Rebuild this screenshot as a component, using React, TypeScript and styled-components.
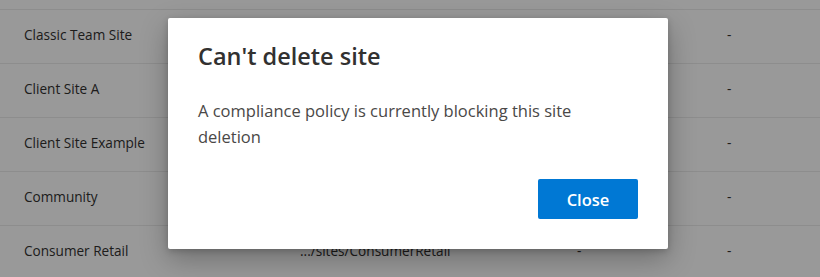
import styled, { createGlobalStyle } from 'styled-components';

const GlobalStyle = createGlobalStyle`
  html, body {
    margin: 0;
    padding: 0;
    background: #ffffff;
    font-family: "Open Sans", "Noto Sans", sans-serif;
  }
`;

const Page = styled.div`
  position: relative;
  width: 820px;
  height: 277px;
  overflow: hidden;
  background: #ffffff;
`;

const Table = styled.div`
  display: flex;
  flex-direction: column;
  padding-top: 9px;
`;

const Row = styled.div`
  display: grid;
  grid-template-columns: 276px 274px 150px 1fr;
  align-items: center;
  height: 54px;
  box-sizing: border-box;
  padding: 0 0 5px 24px;
  border-top: 1px solid #ebebeb;
  font-size: 13.6px;
  color: #323130;
`;

const Cell = styled.div<{ $center?: boolean }>`
  white-space: nowrap;
  ${(p) => (p.$center ? 'padding-left: 3px;' : '')}
`;

const Overlay = styled.div`
  position: absolute;
  inset: 0;
  background: rgba(0, 0, 0, 0.4);
`;

const Dialog = styled.div`
  position: absolute;
  left: 168px;
  top: 18px;
  width: 500px;
  height: 231px;
  box-sizing: border-box;
  background: #ffffff;
  border-radius: 2px;
  box-shadow: 0 10px 28px rgba(0, 0, 0, 0.28), 0 2px 6px rgba(0, 0, 0, 0.18);
  padding: 21px 30px 30px 30px;
  display: flex;
  flex-direction: column;
`;

const Title = styled.h2`
  margin: 0;
  font-size: 23.5px;
  font-weight: 600;
  line-height: 34px;
  color: #323130;
`;

const Body = styled.p`
  margin: 25px 0 0 0;
  font-size: 16.5px;
  line-height: 26px;
  color: #4a4847;
  width: 420px;
`;

const Footer = styled.div`
  margin-top: auto;
  display: flex;
  justify-content: flex-end;
`;

const PrimaryButton = styled.button`
  width: 100px;
  height: 40px;
  border: none;
  border-radius: 2px;
  background: #0078d4;
  color: #ffffff;
  font-family: inherit;
  font-size: 16.5px;
  font-weight: 600;
  cursor: pointer;
`;

const rows = [
  { name: 'Classic Team Site', url: '', a: '', b: '-' },
  { name: 'Client Site A', url: '', a: '', b: '-' },
  { name: 'Client Site Example', url: '', a: '', b: '-' },
  { name: 'Community', url: '', a: '', b: '-' },
  { name: 'Consumer Retail', url: '.../sites/ConsumerRetail', a: '-', b: '-' },
];

export default function App() {
  return (
    <Page>
      <GlobalStyle />
      <Table>
        {rows.map((r) => (
          <Row key={r.name}>
            <Cell>{r.name}</Cell>
            <Cell>{r.url}</Cell>
            <Cell $center>{r.a}</Cell>
            <Cell $center>{r.b}</Cell>
          </Row>
        ))}
      </Table>
      <Overlay />
      <Dialog role="dialog">
        <Title>Can't delete site</Title>
        <Body>A compliance policy is currently blocking this site deletion</Body>
        <Footer>
          <PrimaryButton>Close</PrimaryButton>
        </Footer>
      </Dialog>
    </Page>
  );
}
